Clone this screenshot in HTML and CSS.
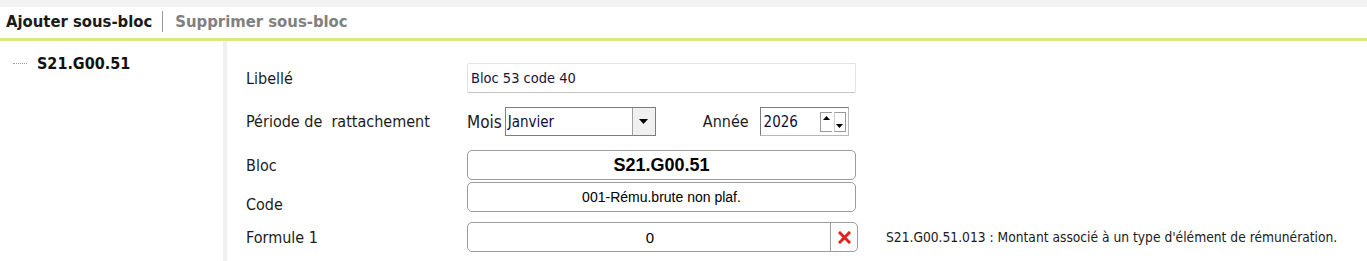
FILE: index.html
```html
<!DOCTYPE html>
<html lang="fr">
<head>
    <meta charset="UTF-8">
    <title>Sous-bloc</title>
    <link rel="stylesheet" href="styles.css">
</head>
<body>

<div class="topstrip"></div>

<div class="toolbar">
    <span class="tool active">Ajouter sous-bloc</span>
    <span class="tool-sep"></span>
    <span class="tool disabled">Supprimer sous-bloc</span>
</div>

<div class="main">
    <div class="tree">
        <div class="tree-item">
            <span class="tree-dots"></span>
            <span class="tree-label">S21.G00.51</span>
        </div>
    </div>

    <div class="form">
        <div class="row row-libelle">
            <div class="label">Libellé</div>
            <div class="input">Bloc 53 code 40</div>
        </div>

        <div class="row row-periode">
            <div class="label">Période de &nbsp;rattachement</div>
            <div class="periode">
                <span class="small-label">Mois</span>
                <div class="select">
                    <span class="select-value">Janvier</span>
                    <span class="select-btn">
                        <svg width="9" height="5" viewBox="0 0 9 5"><path d="M0 0h9L4.5 5z" fill="#000"/></svg>
                    </span>
                </div>
                <span class="small-label annee">Année</span>
                <div class="spinner">
                    <span class="spinner-value">2026</span>
                    <span class="spin up"><svg width="7" height="4" viewBox="0 0 7 4"><path d="M0 4h7L3.5 0z" fill="#000"/></svg></span>
                    <span class="spin down"><svg width="7" height="4" viewBox="0 0 7 4"><path d="M0 0h7L3.5 4z" fill="#000"/></svg></span>
                </div>
            </div>
        </div>

        <div class="row row-bloc">
            <div class="label">Bloc</div>
            <div class="button bold">S21.G00.51</div>
        </div>

        <div class="row row-code">
            <div class="label label-low">Code</div>
            <div class="button">001-Rému.brute non plaf.</div>
        </div>

        <div class="row row-formule">
            <div class="label">Formule 1</div>
            <div class="formule">
                <span class="formule-value">0</span>
                <span class="formule-clear">
                    <svg width="13" height="13" viewBox="0 0 13 13">
                        <path d="M2 2L11 11M11 2L2 11" stroke="#e3211b" stroke-width="3" stroke-linecap="square"/>
                    </svg>
                </span>
            </div>
            <div class="help">S21.G00.51.013 : Montant associé à un type d'élément de rémunération.</div>
        </div>
    </div>
</div>

</body>
</html>
```

FILE: styles.css
```css
* {
    margin: 0;
    padding: 0;
    box-sizing: border-box;
}
body {
    font-family: "DejaVu Sans Condensed", "DejaVu Sans", sans-serif;
    font-stretch: condensed;
    font-size: 16px;
    color: #1b1b1b;
    background-color: #fff;
    height: 261px;
    overflow: hidden;
}
.topstrip {
    height: 7px;
    background-color: #f2f2f2;
}
.toolbar {
    height: 34px;
    display: flex;
    align-items: center;
    padding-left: 6px;
    padding-bottom: 3px;
    border-bottom: 3px solid #dae886;
}
.tool {
    font-weight: bold;
    font-size: 16.5px;
}
.tool.active {
    color: #1a1a1a;
}
.tool.disabled {
    color: #808080;
}
.tool-sep {
    width: 1px;
    height: 21px;
    background-color: #9a9a9a;
    margin: 0 12px 0 10px;
}
.main {
    display: flex;
    height: 220px;
}
.tree {
    width: 227px;
    border-right: 4px solid #f0f0f0;
    padding-top: 12px;
}
.tree-item {
    display: flex;
    align-items: center;
    height: 20px;
}
.tree-dots {
    width: 14px;
    margin-left: 13px;
    margin-right: 10px;
    border-top: 1px dotted #a0a0a0;
}
.tree-label {
    font-weight: bold;
    color: #111;
}
.form {
    padding-left: 19px;
    padding-top: 22px;
    display: flex;
    flex-direction: column;
}
.row {
    display: flex;
    align-items: center;
}
.label {
    width: 221px;
}
.label-low {
    align-self: flex-end;
    margin-bottom: -2px;
}
.row-periode {
    margin-top: 14px;
}
.row-bloc {
    margin-top: 14px;
}
.row-code {
    margin-top: 2px;
}
.row-formule {
    margin-top: 10px;
}
.input {
    width: 389px;
    height: 30px;
    border: 1px solid #e3e3e3;
    border-bottom-color: #c4c4c4;
    border-radius: 2px;
    padding-left: 3px;
    display: flex;
    align-items: center;
    font-size: 14.5px;
    color: #14143c;
}
.periode {
    display: flex;
    align-items: center;
    height: 29px;
}
.small-label {
    font-size: 17px;
    margin-right: 3px;
}
.small-label.annee {
    font-size: 16px;
    margin-left: 47px;
    margin-right: 11px;
}
.select {
    width: 151px;
    height: 29px;
    border: 1px solid #7d7d7d;
    display: flex;
    font-size: 15px;
}
.select-value {
    flex: 1;
    padding-left: 2px;
    display: flex;
    align-items: center;
    color: #0e0e3a;
}
.select-btn {
    width: 23px;
    background-color: #f0f0f0;
    border-left: 1px solid #a0a0a0;
    display: flex;
    align-items: center;
    justify-content: center;
}
.spinner {
    width: 89px;
    height: 29px;
    border: 1px solid #7d7d7d;
    border-right-color: #b8b8b8;
    border-bottom-color: #b8b8b8;
    display: flex;
    align-items: center;
    padding-right: 2px;
    font-size: 15px;
}
.spinner-value {
    flex: 1;
    padding-left: 3px;
    color: #0e0e3a;
}
.spin {
    width: 12px;
    height: 20px;
    border: 1px solid #9a9a9a;
    display: flex;
    justify-content: center;
    background-color: #fff;
}
.spin.up {
    align-items: flex-start;
    padding-top: 3px;
    border-right: none;
}
.spin.down {
    align-items: flex-end;
    padding-bottom: 3px;
    margin-left: 2px;
    border-left-color: #d0d0d0;
}
.button {
    width: 389px;
    height: 30px;
    border: 1px solid #9c9c9c;
    border-radius: 5px;
    display: flex;
    align-items: center;
    justify-content: center;
    font-family: "Liberation Sans", Arial, sans-serif;
    font-stretch: normal;
    font-size: 14px;
    color: #000;
}
.button.bold {
    font-weight: bold;
    font-size: 18px;
}
.formule {
    width: 391px;
    height: 30px;
    border: 1px solid #9c9c9c;
    border-radius: 5px;
    display: flex;
    font-family: "Liberation Sans", Arial, sans-serif;
    font-stretch: normal;
    font-size: 15px;
    color: #000;
}
.formule-value {
    flex: 1;
    display: flex;
    align-items: center;
    justify-content: center;
    padding-left: 2px;
}
.formule-clear {
    width: 27px;
    border-left: 1px solid #9c9c9c;
    display: flex;
    align-items: center;
    justify-content: center;
}
.help {
    margin-left: 28px;
    font-size: 13.7px;
    color: #1b1b1b;
}
```
